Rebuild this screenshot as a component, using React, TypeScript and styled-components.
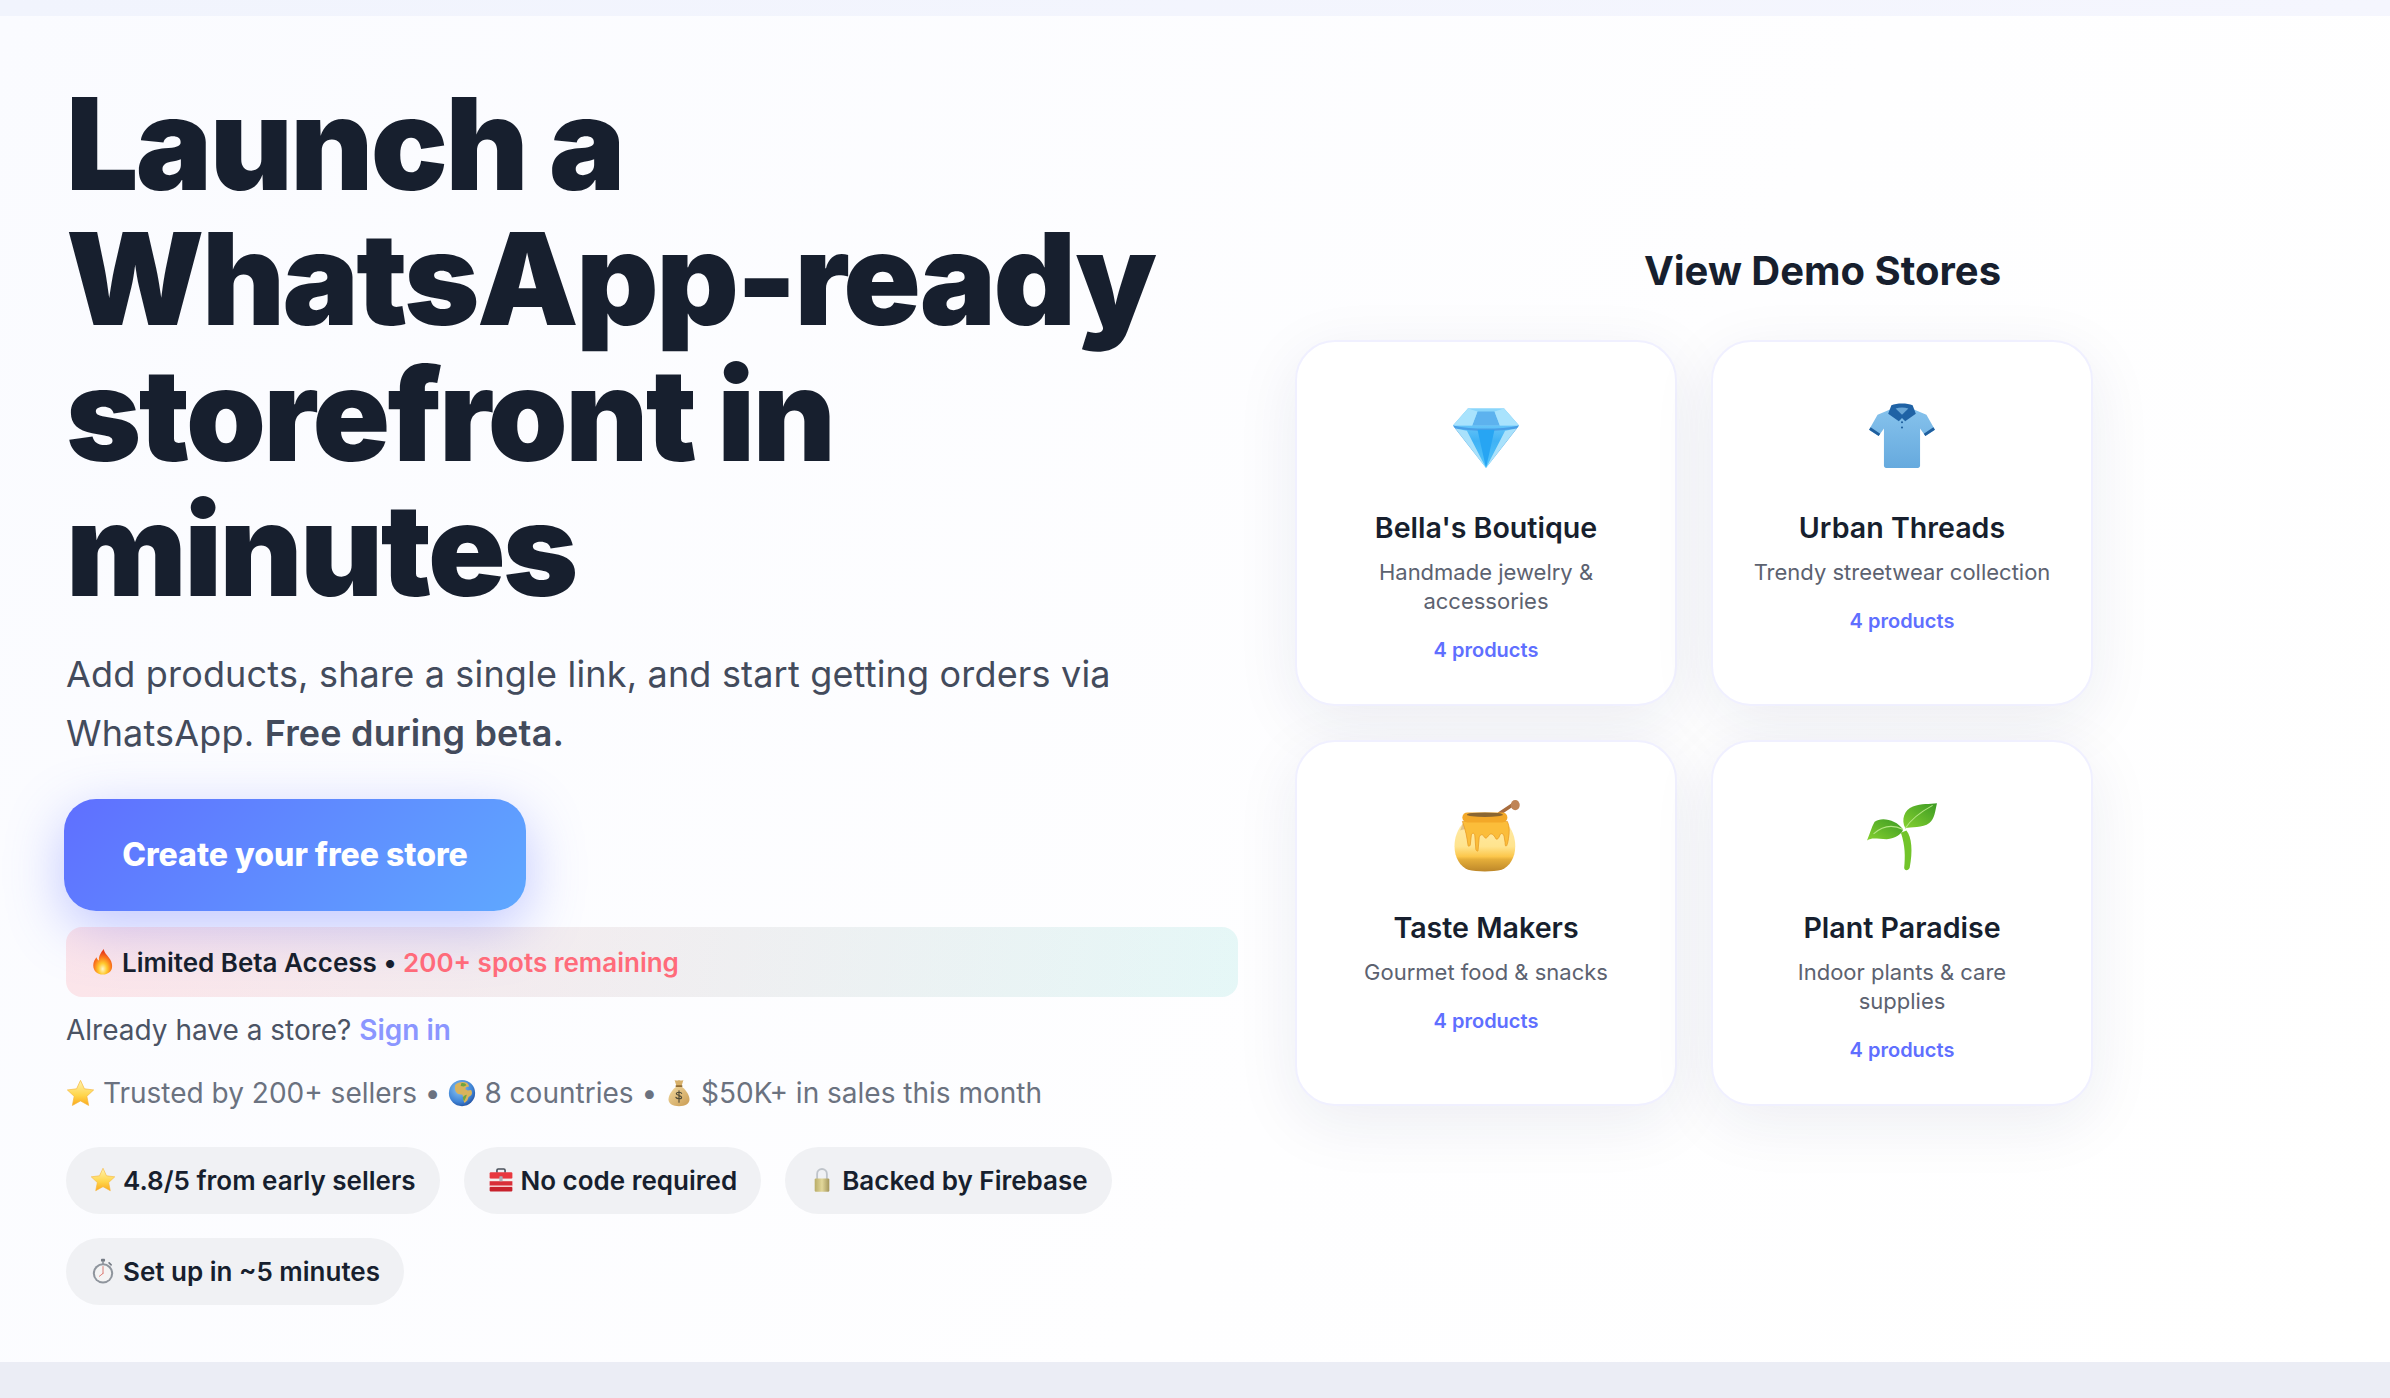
import React from "react";
import styled, { createGlobalStyle } from "styled-components";

const GlobalStyle = createGlobalStyle`
  * {
    box-sizing: border-box;
  }

  html,
  body {
    margin: 0;
    padding: 0;
    background: #f3f5fd;
    font-family: Inter, "Liberation Sans", sans-serif;
    color: #171f2e;
  }
`;

const Page = styled.div`
  display: flex;
  flex-direction: column;
  height: 1398px;
  overflow: hidden;
  background: linear-gradient(90deg, #f1f4fd 0%, #f5f6fe 100%);
`;

const TopStrip = styled.div`
  flex: 0 0 16px;
`;

const BottomStrip = styled.div`
  flex: 0 0 36px;
  background: #ebedf5;
`;

const Hero = styled.main`
  flex: 1;
  display: grid;
  grid-template-columns: 1229px 1fr;
  padding: 60px 40px 0 66px;
  background: linear-gradient(120deg, #fafbff 0%, #fefeff 60%, #ffffff 100%);
`;

const LeftColumn = styled.section`
  display: flex;
  flex-direction: column;
  align-items: flex-start;
`;

const Headline = styled.h1`
  margin: 0 0 27px;
  width: 1172px;
  font-size: 128px;
  line-height: 135.4px;
  font-weight: 900;
  letter-spacing: -2.56px;
  color: #171f2e;
`;

const Subhead = styled.p`
  margin: 0 0 35.5px;
  width: 1172px;
  font-size: 36px;
  line-height: 59.4px;
  letter-spacing: 0.18px;
  color: #434b5c;

  strong {
    font-weight: 600;
  }
`;

const CreateButton = styled.a`
  display: flex;
  align-items: center;
  justify-content: center;
  width: 462px;
  height: 112px;
  margin: 0 0 16px -2px;
  border-radius: 32px;
  background: linear-gradient(135deg, #5f6fff 0%, #5fa8ff 100%);
  box-shadow: 0 16px 56px rgba(95, 111, 255, 0.38);
  color: #ffffff;
  font-size: 32px;
  font-weight: 800;
`;

const OfferBar = styled.div`
  display: flex;
  align-items: center;
  width: 1172px;
  height: 70px;
  padding: 1px 24px 0;
  border-radius: 16px;
  background: linear-gradient(100deg, rgba(255, 107, 122, 0.16) 0%, rgba(78, 205, 196, 0.14) 100%);
  font-size: 26px;
  font-weight: 600;
  color: #171f2e;
  white-space: pre;
`;

const Remaining = styled.span`
  color: #ff6b7a;
`;

const SignInLine = styled.p`
  margin: 11.5px 0 0;
  font-size: 28px;
  line-height: 44px;
  color: #4b5364;
`;

const SignInLink = styled.a`
  color: #8b96ff;
  font-weight: 600;
`;

const TrustLine = styled.p`
  display: flex;
  align-items: center;
  margin: 19px 0 0;
  font-size: 28px;
  line-height: 44px;
  color: #6b7280;
  white-space: pre;
`;

const Pills = styled.div`
  display: flex;
  flex-wrap: wrap;
  gap: 24px;
  width: 1172px;
  margin-top: 31.5px;
`;

const Pill = styled.span`
  display: inline-flex;
  align-items: center;
  height: 67px;
  padding: 0 24px;
  border-radius: 34px;
  background: #f0f1f4;
  font-size: 26px;
  font-weight: 600;
  color: #171f2e;
`;

const RightColumn = styled.section`
  padding-top: 167.5px;
`;

const DemoTitle = styled.h2`
  margin: 0 0 42px;
  text-align: center;
  font-size: 40px;
  line-height: 54px;
  font-weight: 700;
  color: #171f2e;
`;

const StoreGrid = styled.div`
  display: grid;
  grid-template-columns: repeat(2, 382px);
  grid-auto-rows: 366px;
  gap: 34px;
`;

const StoreCard = styled.article`
  padding: 56px 39px;
  border: 2px solid #f0f0ff;
  border-radius: 40px;
  background: #ffffff;
  box-shadow: 0 16px 64px rgba(30, 40, 90, 0.08);
  text-align: center;
`;

const StoreIcon = styled.div`
  display: flex;
  align-items: center;
  justify-content: center;
  height: 76px;
  margin-bottom: 35px;
`;

const StoreName = styled.h3`
  margin: 0 0 11px;
  font-size: 28.6px;
  line-height: 38px;
  font-weight: 600;
  color: #171f2e;
`;

const StoreDescription = styled.p`
  margin: 0 0 20px;
  font-size: 22px;
  line-height: 29px;
  color: #5c6270;
`;

const ProductCount = styled.span`
  font-size: 20px;
  line-height: 28px;
  font-weight: 600;
  color: #5f6fff;
`;

const EmojiBox = styled.svg<{ $gap: number }>`
  flex: none;
  display: block;
  margin-right: ${(props) => props.$gap}px;
`;

type EmojiName =
  | "fire"
  | "star"
  | "globe"
  | "bag"
  | "toolbox"
  | "lock"
  | "stopwatch"
  | "gem"
  | "shirt"
  | "honey"
  | "sprout";

function Emoji({ name, size, gap = 0 }: { name: EmojiName; size: number; gap?: number }) {
  return (
    <EmojiBox $gap={gap} width={size} height={size} viewBox="0 0 64 64" aria-hidden="true">
      {emojiArt[name]}
    </EmojiBox>
  );
}

const emojiArt: Record<EmojiName, React.ReactNode> = {
  fire: (
    <>
      <defs>
        <radialGradient id="fireFill" cx="50%" cy="78%" r="65%">
          <stop offset="0" stopColor="#fff6c8" />
          <stop offset="0.35" stopColor="#ffc92e" />
          <stop offset="0.7" stopColor="#fb7a1c" />
          <stop offset="1" stopColor="#e8401c" />
        </radialGradient>
      </defs>
      <path
        d="M34 0c1 12 13 18 18 30 5 13 2 23-5 28-4 3-9 5-15 5-13 0-24-8-24-23 0-9 4-14 8-20 1 4 3 7 6 8-1-10 5-20 12-28z"
        fill="url(#fireFill)"
      />
    </>
  ),
  star: (
    <>
      <defs>
        <linearGradient id="starFill" x1="0" y1="0" x2="0" y2="1">
          <stop offset="0" stopColor="#fff3b0" />
          <stop offset="0.6" stopColor="#ffd54a" />
          <stop offset="1" stopColor="#fba91e" />
        </linearGradient>
      </defs>
      <path
        d="M32 3l8.6 18.6 20.4 2.6-15 14 4 20.2L32 48.4 14 58.4l4-20.2-15-14 20.4-2.6z"
        fill="url(#starFill)"
        stroke="#f6b73c"
        strokeWidth="1.5"
        strokeLinejoin="round"
      />
    </>
  ),
  globe: (
    <>
      <defs>
        <radialGradient id="seaFill" cx="40%" cy="35%" r="70%">
          <stop offset="0" stopColor="#8cc6f2" />
          <stop offset="0.7" stopColor="#3f84d6" />
          <stop offset="1" stopColor="#23509f" />
        </radialGradient>
      </defs>
      <circle cx="32" cy="32" r="30" fill="url(#seaFill)" />
      <path
        d="M16 14c6-7 18-9 26-6 3 2 6 6 6 9l-6 1-3 5 6 3 8-1c3 6 2 9 0 12l-6 4-3 8-6 6c-2-3-3-7-3-11l-2-8-10-2c-5-3-7-8-7-11z"
        fill="#d9b35c"
      />
      <path d="M30 10c5-2 10 0 12 4l-6 3-7-1z" fill="#6fa53e" />
      <path d="M34 42c2-4 6-6 9-6l-2 6-4 8-2-2z" fill="#6fa53e" />
    </>
  ),
  bag: (
    <>
      <defs>
        <linearGradient id="bagFill" x1="0" y1="0" x2="1" y2="1">
          <stop offset="0" stopColor="#f2d9a0" />
          <stop offset="1" stopColor="#c99b52" />
        </linearGradient>
      </defs>
      <path d="M22 2c3 2 7 2 10 0 3 2 7 2 10 0l-4 14H26z" fill="#d7b06a" />
      <rect x="24" y="14" width="16" height="4" rx="2" fill="#8e6a33" />
      <path d="M25 18h14c10 8 17 19 17 29 0 10-10 15-24 15S8 57 8 47c0-10 7-21 17-29z" fill="url(#bagFill)" />
      <path
        d="M38 33c-1-3-11-4-12 0-1 5 12 4 12 9 0 4-11 4-13 0M32 27v26"
        fill="none"
        stroke="#4f4a36"
        strokeWidth="2.6"
        strokeLinecap="round"
      />
    </>
  ),
  toolbox: (
    <>
      <path d="M22 14v-6a3 3 0 0 1 3-3h14a3 3 0 0 1 3 3v6" fill="none" stroke="#49505a" strokeWidth="4" />
      <rect x="4" y="13" width="56" height="16" rx="3" fill="#e8383f" />
      <rect x="4" y="29" width="56" height="6" fill="#f4f0ee" />
      <rect x="4" y="35" width="56" height="11" fill="#d92f38" />
      <rect x="4" y="46" width="56" height="3" fill="#f4c9c9" />
      <rect x="4" y="49" width="56" height="11" rx="2" fill="#c8222c" />
      <rect x="28" y="23" width="8" height="12" rx="1.5" fill="#aab0b8" />
    </>
  ),
  lock: (
    <>
      <defs>
        <linearGradient id="lockFill" x1="0" y1="0" x2="1" y2="0">
          <stop offset="0" stopColor="#b9ad68" />
          <stop offset="0.5" stopColor="#e2d79a" />
          <stop offset="1" stopColor="#a3955a" />
        </linearGradient>
      </defs>
      <path d="M20 30V17a12 12 0 0 1 24 0v13" fill="none" stroke="#bfc4ca" strokeWidth="4.5" />
      <rect x="14" y="28" width="36" height="33" rx="3" fill="url(#lockFill)" />
    </>
  ),
  stopwatch: (
    <>
      <rect x="27" y="2" width="10" height="7" rx="2" fill="#757b84" />
      <rect x="30" y="8" width="4" height="7" fill="#8e949c" />
      <path d="M47 12l5 5" stroke="#757b84" strokeWidth="4" strokeLinecap="round" />
      <circle cx="32" cy="38" r="25" fill="#8f959d" />
      <circle cx="32" cy="38" r="20" fill="#f4f4f4" />
      <path d="M32 38V21M32 38l-9 7" stroke="#d8645b" strokeWidth="2" strokeLinecap="round" />
    </>
  ),
  gem: (
    <>
      <defs>
        <linearGradient id="gemBody" x1="0" y1="0" x2="0" y2="1">
          <stop offset="0" stopColor="#8fd7fb" />
          <stop offset="0.55" stopColor="#3fb2f5" />
          <stop offset="1" stopColor="#54c5fa" />
        </linearGradient>
      </defs>
      <path d="M15 6h34l14 16-31 40L1 22z" fill="url(#gemBody)" />
      <path d="M15 6h34l14 16H1z" fill="#8ad6fb" />
      <path d="M24 9h16l5 13H19z" fill="#5db2ee" />
      <path d="M15 6l9 3-5 13L1 22zM49 6l-9 3 5 13 18 0z" fill="#a9e3fd" />
      <path d="M1 22c18 4 44 4 62 0l-2 3c-18 3-40 3-58 0z" fill="#4a9fe6" />
      <path d="M24 26h16l-8 36z" fill="#27a5f3" />
      <path d="M3 25l29 37L14 27zM61 25L32 62l18-35z" fill="#a9e1fb" />
      <path d="M1 22L32 62 3 25zM63 22L32 62 61 25z" fill="#2f7ec9" />
    </>
  ),
  shirt: (
    <>
      <defs>
        <linearGradient id="shirtBody" x1="0" y1="0" x2="0" y2="1">
          <stop offset="0" stopColor="#86c2ec" />
          <stop offset="1" stopColor="#66aade" />
        </linearGradient>
      </defs>
      <path
        d="M23 6L9 12 1 26l9 6 5-7v35c0 1 1 2 2 2h30c1 0 2-1 2-2V25l5 7 9-6-8-14-14-6-9 5z"
        fill="url(#shirtBody)"
      />
      <path d="M1 26l9 6 1.500-2.200-9-6zM63 26l-9 6-1.500-2.200 9-6z" fill="#1f5f9e" />
      <path d="M22 3c5-2 15-2 20 0l3 8-10 7-3-3-3 3-10-7z" fill="#1f62a5" />
      <path d="M26 6c4-1 8-1 12 0l-6 6z" fill="#6aa6d6" />
      <circle cx="32" cy="19" r="1" fill="#1f5f9e" />
      <circle cx="32" cy="24" r="1" fill="#1f5f9e" />
    </>
  ),
  honey: (
    <>
      <defs>
        <linearGradient id="honeyPot" x1="0" y1="0" x2="0" y2="1">
          <stop offset="0" stopColor="#ffeaa8" />
          <stop offset="0.5" stopColor="#ffe48e" />
          <stop offset="0.7" stopColor="#fcc74c" />
          <stop offset="0.76" stopColor="#e5ae3a" />
          <stop offset="1" stopColor="#bd8729" />
        </linearGradient>
      </defs>
      <g transform="translate(3 0)">
        <path d="M41 12L53 4" stroke="#a86c3e" strokeWidth="3" strokeLinecap="round" />
        <ellipse cx="55" cy="4.500" rx="4" ry="4.500" fill="#bf8455" />
        <path
          d="M10 19C3 26 1 34 1 41c0 10 5 18 12 21 8 2 22 2 30 0 7-3 12-11 12-21 0-7-2-15-9-22z"
          fill="url(#honeyPot)"
        />
        <path d="M9 19h38l3 8c-10-3-35-3-44 0z" fill="#c9a377" opacity="0.55" />
        <path
          d="M8 19h40c2 4 2 10 1 15-1 8-3 9-3 4l-1-6c-1-3-3-3-4 0-1 3-3 4-4 1-2-3-4-4-6-1-2 3-3 2-4 0-2-2-3-1-4 1l-1 11c0 2-1 2-2 0l-1-13c-1-2-2-2-3 0l-1 9c-1 2-2 1-2 0-1-7-2-13-5-21z"
          fill="#fbbd3a"
          stroke="#e4941c"
          strokeWidth="0.6"
        />
        <rect x="8" y="11" width="40" height="9" rx="4.500" fill="#f3a828" />
        <ellipse cx="28" cy="13" rx="16" ry="2" fill="#8a6632" />
      </g>
    </>
  ),
  sprout: (
    <>
      <defs>
        <linearGradient id="leafFill" x1="0" y1="1" x2="1" y2="0">
          <stop offset="0" stopColor="#86d12f" />
          <stop offset="1" stopColor="#3b9a24" />
        </linearGradient>
      </defs>
      <path d="M36 27c5 6 6 19 3 34-1 3-5 3-5 0 1-10 1-20-3-32z" fill="#72c42a" />
      <path d="M33 26C27 17 13 14 7 19 4 24 2 32 0 36c5-3 10-1 18-1 8-1 14-5 15-9z" fill="url(#leafFill)" />
      <path d="M35 25c-4-8-1-17 7-20 8-3 15-2 22-3-2 8-2 14-7 18-6 5-17 3-22 5z" fill="url(#leafFill)" />
      <path d="M35 25c5-8 14-15 25-21M33 26C25 22 15 22 6 30" fill="none" stroke="#b5e684" strokeWidth="1" />
    </>
  ),
};

const stores: { name: string; description: string; icon: EmojiName; size: number }[] = [
  { name: "Bella's Boutique", description: "Handmade jewelry & accessories", icon: "gem", size: 68 },
  { name: "Urban Threads", description: "Trendy streetwear collection", icon: "shirt", size: 68 },
  { name: "Taste Makers", description: "Gourmet food & snacks", icon: "honey", size: 72 },
  { name: "Plant Paradise", description: "Indoor plants & care supplies", icon: "sprout", size: 70 },
];

const pills: { label: string; icon: EmojiName }[] = [
  { label: "4.8/5 from early sellers", icon: "star" },
  { label: "No code required", icon: "toolbox" },
  { label: "Backed by Firebase", icon: "lock" },
  { label: "Set up in ~5 minutes", icon: "stopwatch" },
];

export default function App() {
  return (
    <>
      <GlobalStyle />
      <Page>
        <TopStrip />
        <Hero>
          <LeftColumn>
            <Headline>
              Launch a
              <br />
              WhatsApp-ready
              <br />
              storefront in
              <br />
              minutes
            </Headline>
            <Subhead>
              Add products, share a single link, and start getting orders via WhatsApp.{" "}
              <strong>Free during beta.</strong>
            </Subhead>
            <CreateButton>Create your free store</CreateButton>
            <OfferBar>
              <Emoji name="fire" size={26} gap={6} />
              Limited Beta Access • <Remaining>200+ spots remaining</Remaining>
            </OfferBar>
            <SignInLine>
              Already have a store? <SignInLink>Sign in</SignInLink>
            </SignInLine>
            <TrustLine>
              <Emoji name="star" size={29} gap={8} />
              Trusted by 200+ sellers •{" "}
              <Emoji name="globe" size={28} gap={8} />
              8 countries •{" "}
              <Emoji name="bag" size={28} gap={8} />
              $50K+ in sales this month
            </TrustLine>
            <Pills>
              {pills.map((pill) => (
                <Pill key={pill.label}>
                  <Emoji name={pill.icon} size={26} gap={7} />
                  {pill.label}
                </Pill>
              ))}
            </Pills>
          </LeftColumn>
          <RightColumn>
            <DemoTitle>View Demo Stores</DemoTitle>
            <StoreGrid>
              {stores.map((store) => (
                <StoreCard key={store.name}>
                  <StoreIcon>
                    <Emoji name={store.icon} size={store.size} />
                  </StoreIcon>
                  <StoreName>{store.name}</StoreName>
                  <StoreDescription>{store.description}</StoreDescription>
                  <ProductCount>4 products</ProductCount>
                </StoreCard>
              ))}
            </StoreGrid>
          </RightColumn>
        </Hero>
        <BottomStrip />
      </Page>
    </>
  );
}
